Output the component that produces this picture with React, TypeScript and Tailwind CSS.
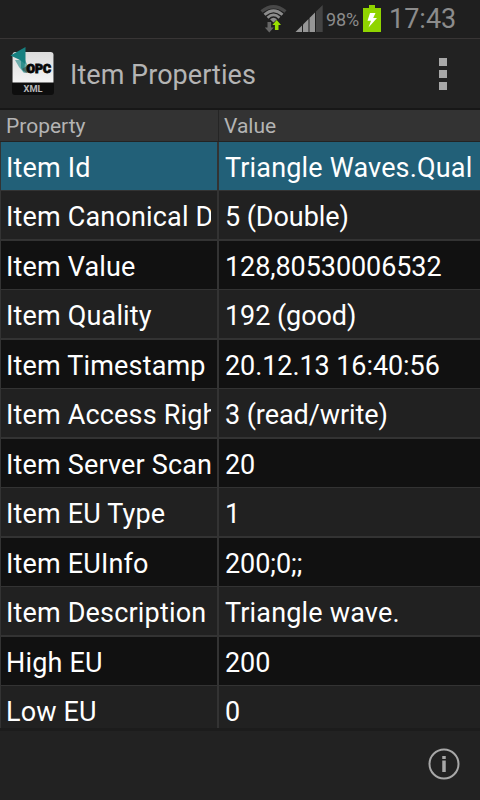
import { clsx } from "clsx";

type Property = {
  name: string;
  value: string;
  selected?: boolean;
};

const properties: Property[] = [
  { name: "Item Id", value: "Triangle Waves.Qual", selected: true },
  { name: "Item Canonical D", value: "5 (Double)" },
  { name: "Item Value", value: "128,80530006532" },
  { name: "Item Quality", value: "192 (good)" },
  { name: "Item Timestamp", value: "20.12.13 16:40:56" },
  { name: "Item Access Righ", value: "3 (read/write)" },
  { name: "Item Server Scan", value: "20" },
  { name: "Item EU Type", value: "1" },
  { name: "Item EUInfo", value: "200;0;;" },
  { name: "Item Description", value: "Triangle wave." },
  { name: "High EU", value: "200" },
  { name: "Low EU", value: "0" },
];

function WifiIcon() {
  return (
    <svg width="28" height="30" viewBox="0 0 28 30" fill="none">
      <path d="M1.5 6.5Q13.5 -3 25.5 6.5" stroke="#484848" strokeWidth="3.2" />
      <path d="M4.500 9.800Q13.5 1.800 22.500 9.800" stroke="#8c8c8c" strokeWidth="2.8" />
      <path d="M7.500 12.800Q13.5 7 19.500 12.800" stroke="#8c8c8c" strokeWidth="2.600" />
      <path d="M10 14.300Q13.5 11.300 17 14.300L13.5 17.500Z" fill="#8c8c8c" />
      <path d="M7.500 17h3.600v5.500h2.700L9.300 27.500L4.800 22.500h2.700Z" fill="#666" />
      <path d="M16.700 15L21 20H18.500V25H14.900V20H12.400Z" fill="#99e000" />
    </svg>
  );
}

function SignalIcon() {
  return (
    <svg width="28" height="28" viewBox="0 0 28 28">
      <path d="M0.500 27L7 20.500V27Z" fill="#969696" />
      <path d="M8 27V19.500L13.500 14V27Z" fill="#969696" />
      <path d="M14.500 27V13L20 7.500V27Z" fill="#969696" />
      <path d="M21 27V6.500L27.700 0V27Z" fill="#444" />
    </svg>
  );
}

function BatteryIcon() {
  return (
    <svg width="18" height="27" viewBox="0 0 18 27">
      <path d="M6 0H12V3H18V27H0V3H6Z" fill="#8fd400" />
      <path d="M7 8H12.500L10.200 13H14L5.500 22.500L8 15.800H4.500Z" fill="#fff" />
    </svg>
  );
}

function AppIcon() {
  return (
    <svg width="46" height="50" viewBox="0 0 46 50">
      <defs>
        <linearGradient id="plate" x1="0" y1="0" x2="0" y2="1">
          <stop offset="0" stopColor="#dcdcdc" />
          <stop offset="1" stopColor="#f4f4f4" />
        </linearGradient>
      </defs>
      <rect x="2" y="8" width="42" height="40" rx="3" fill="#0e0e0e" />
      <path d="M2.500 35.500V8Q2.500 5 5.500 5H40.500Q43.500 5 43.500 8V35.500Z" fill="url(#plate)" />
      <path d="M5 13L15 13L18 19L17 25L14 26L9 20Z" fill="#6faead" />
      <path d="M11 13L15 16L14 25L11 21Z" fill="#2f8f8d" />
      <path d="M0.500 8.500L15.500 0V17L9 12.500Z" fill="#168080" />
      <path d="M12 22L20 17L21 25L16 26Z" fill="#37504f" opacity="0.7" />
      <text x="16.500" y="26.300" fontFamily="Roboto, sans-serif" fontSize="12" fontWeight="900" fill="#080808" stroke="#080808" strokeWidth="0.9" textLength="24.500" lengthAdjust="spacingAndGlyphs">OPC</text>
      <text x="13.500" y="44.600" fontFamily="Roboto, sans-serif" fontSize="9.300" fontWeight="700" fill="#b8b8b8" textLength="19" lengthAdjust="spacingAndGlyphs">XML</text>
    </svg>
  );
}

function StatusBar() {
  return (
    <div className="flex h-[39px] items-start border-b border-[#383535] bg-[#1f1f1f] text-[#8c8c8c]">
      <div className="ml-[260px] mt-[5px] w-[35px]"><WifiIcon /></div>
      <div className="mt-[5px] w-[31px]"><SignalIcon /></div>
      <span className="mt-[8px] w-[37px] text-[18px] leading-6 tracking-[-0.1px]">98%</span>
      <div className="mt-[5px] w-[26px]"><BatteryIcon /></div>
      <span className="mt-[3px] text-[27px] leading-8">17:43</span>
    </div>
  );
}

function ActionBar() {
  return (
    <header className="flex h-[71px] items-center border-b-2 border-[#171717] bg-[#222]">
      <div className="ml-2.5 mt-2 w-[60px] self-start"><AppIcon /></div>
      <h1 className="mt-0.5 flex-1 text-[27px] leading-8 tracking-[0.05px] text-[#b4b4b4]">Item Properties</h1>
      <div className="mr-[33px] flex flex-col gap-1">
        <i className="size-2 bg-[#a8a8a8]" />
        <i className="size-2 bg-[#a8a8a8]" />
        <i className="size-2 bg-[#a8a8a8]" />
      </div>
    </header>
  );
}

function PropertyRow({ property, even }: { property: Property; even: boolean }) {
  const background = property.selected ? "bg-[#226078]" : even ? "bg-[#212121]" : "bg-[#111]";
  const numeric = /^\d/.test(property.value);

  return (
    <div
      className={clsx(
        "flex shrink-0 border-[#333] pl-px text-[27px] leading-[52px] text-white",
        even ? "h-[50px] border-b-2" : "h-[49px] border-b",
      )}
    >
      <div className={clsx("w-[216px] overflow-hidden whitespace-nowrap pl-[5px] pr-1.5", background)}>
        <span className="block overflow-hidden tracking-[0.17px]">{property.name}</span>
      </div>
      <div
        className={clsx(
          "ml-0.5 flex-1 overflow-hidden whitespace-nowrap pl-1.5",
          background,
          numeric ? "tracking-[-0.08px]" : "tracking-[0.17px]",
        )}
      >
        {property.value}
      </div>
    </div>
  );
}

function PropertyTable() {
  return (
    <main className="flex h-[618px] flex-col overflow-hidden bg-[#333]">
      <div className="flex h-8 shrink-0 border-b border-[#232323] text-[21px] leading-[33px] text-[#b4b4b4]">
        <div className="w-[219px] border-r border-[#252525] pl-1.5">Property</div>
        <div className="pl-[5px]">Value</div>
      </div>
      {properties.map((property, index) => (
        <PropertyRow key={property.name} property={property} even={index % 2 === 1} />
      ))}
    </main>
  );
}

function BottomBar() {
  return (
    <footer className="flex flex-1 items-start justify-end border-t-[3px] border-[#1c1c1c] bg-[#222] pr-5 pt-[17px]">
      <svg width="32" height="32" viewBox="0 0 32 32" fill="none" stroke="#a8a8a8">
        <circle cx="16" cy="16" r="14.500" strokeWidth="2" />
        <path d="M16 8v3M16 12.500V24" strokeWidth="3.500" />
      </svg>
    </footer>
  );
}

export default function App() {
  return (
    <div className="flex h-[800px] w-[480px] flex-col overflow-hidden bg-[#222] font-['Roboto',sans-serif]">
      <StatusBar />
      <ActionBar />
      <PropertyTable />
      <BottomBar />
    </div>
  );
}
